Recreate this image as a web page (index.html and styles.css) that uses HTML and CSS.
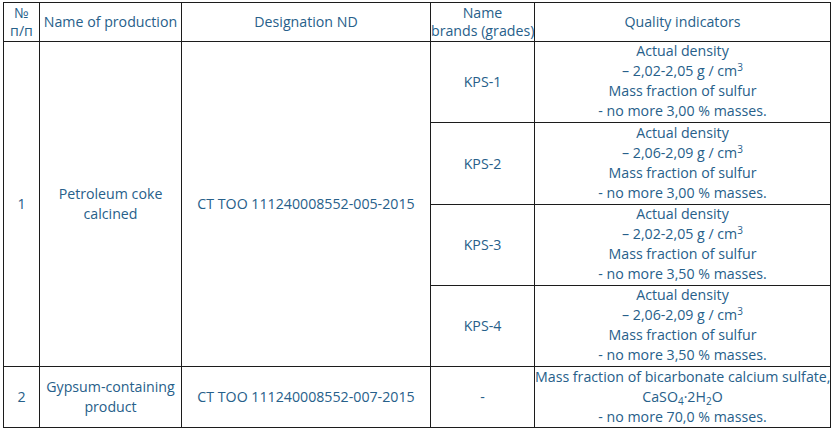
FILE: index.html
```html
<!DOCTYPE html>
<html>
<head>
<meta charset="utf-8">
<link rel="stylesheet" href="styles.css">
</head>
<body>
<table class="spec">
  <colgroup>
    <col class="c1"><col class="c2"><col class="c3"><col class="c4"><col class="c5">
  </colgroup>
  <thead>
    <tr class="head">
      <th>№<br>п/п</th>
      <th>Name of production</th>
      <th>Designation ND</th>
      <th>Name<br>brands (grades)</th>
      <th>Quality indicators</th>
    </tr>
  </thead>
  <tbody>
    <tr class="row">
      <td class="span" rowspan="4">1</td>
      <td class="span" rowspan="4">Petroleum coke<br>calcined</td>
      <td class="span" rowspan="4">CT TOO 111240008552-005-2015</td>
      <td class="grade">KPS-1</td>
      <td class="qual"><div class="q">Actual density<br>– 2,02-2,05 g / cm<sup>3</sup><br>Mass fraction of sulfur<br>- no more 3,00 % masses.</div></td>
    </tr>
    <tr class="row">
      <td class="grade">KPS-2</td>
      <td class="qual tall"><div class="q">Actual density<br>– 2,06-2,09 g / cm<sup>3</sup><br>Mass fraction of sulfur<br>- no more 3,00 % masses.</div></td>
    </tr>
    <tr class="row">
      <td class="grade">KPS-3</td>
      <td class="qual"><div class="q">Actual density<br>– 2,02-2,05 g / cm<sup>3</sup><br>Mass fraction of sulfur<br>- no more 3,50 % masses.</div></td>
    </tr>
    <tr class="row">
      <td class="grade">KPS-4</td>
      <td class="qual"><div class="q">Actual density<br>– 2,06-2,09 g / cm<sup>3</sup><br>Mass fraction of sulfur<br>- no more 3,50 % masses.</div></td>
    </tr>
    <tr class="row last">
      <td>2</td>
      <td>Gypsum-containing<br>product</td>
      <td>CT TOO 111240008552-007-2015</td>
      <td>-</td>
      <td class="qual-last">Mass fraction of bicarbonate calcium sulfate,<br>CaSO<sub>4</sub>·2H<sub>2</sub>O<br>- no more 70,0 % masses.</td>
    </tr>
  </tbody>
</table>
</body>
</html>
```
FILE: styles.css
```css
html, body {
  margin: 0;
  padding: 0;
  background: #ffffff;
}
body {
  padding: 2px 0 0 3px;
  font-family: "Open Sans", "Noto Sans", sans-serif;
  font-size: 14.2px;
  color: #27608a;
}
.spec {
  border-collapse: collapse;
  table-layout: fixed;
  width: 827px;
}
.c1 { width: 36px; }
.c2 { width: 142px; }
.c3 { width: 249px; }
.c4 { width: 104px; }
.c5 { width: 296px; }
.spec th, .spec td {
  border: 1px solid #1c1c1c;
  padding: 0;
  text-align: center;
  vertical-align: middle;
  font-weight: normal;
  white-space: nowrap;
  line-height: 20px;
}
.head th {
  height: 38px;
  line-height: 18px;
}
.qual {
  height: 80px;
}
.qual.tall {
  height: 81px;
}
.q {
  margin: -1px 0 1px;
}
.grade {
  padding-bottom: 4px;
}
.span {
  padding-bottom: 6px;
}
.qual-last {
  height: 60px;
}
sup, sub {
  font-size: 10px;
  line-height: 0;
}
sup { vertical-align: 5px; }
sub { vertical-align: -3px; }
```
